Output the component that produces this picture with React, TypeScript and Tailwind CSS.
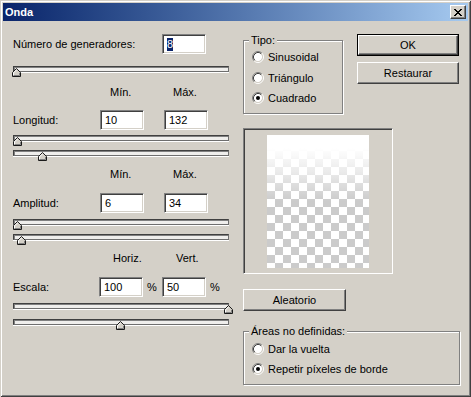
import React from 'react';

const sunken =
  'border border-t-[#808080] border-l-[#808080] border-b-white border-r-white shadow-[inset_1px_1px_0_#404040,inset_-1px_-1px_0_#d4d0c8]';
const raised =
  'border border-t-white border-l-white border-b-[#404040] border-r-[#404040] shadow-[inset_-1px_-1px_0_#808080]';
const etched = 'border border-[#808080] shadow-[inset_1px_1px_0_#ffffff,1px_1px_0_#ffffff]';

const CloseBtn: React.FC = () => (
  <div className={`w-[16px] h-[14px] bg-[#d4d0c8] flex items-center justify-center ${raised}`}>
    <svg width="8" height="7" viewBox="0 0 8 7" shapeRendering="crispEdges">
      <path
        fill="#000"
        d="M0 0h2v1H0zM6 0h2v1H6zM1 1h2v1H1zM5 1h2v1H5zM2 2h4v1H2zM3 3h2v1H3zM2 4h4v1H2zM1 5h2v1H1zM5 5h2v1H5zM0 6h2v1H0zM6 6h2v1H6z"
      />
    </svg>
  </div>
);

const Thumb: React.FC<{ left: number }> = ({ left }) => (
  <svg
    width="9"
    height="9"
    viewBox="0 0 9 9"
    className="absolute top-[1px]"
    style={{ left }}
  >
    <polygon points="0.5,8.5 0.5,4.5 4.5,0.5 8.5,4.5 8.5,8.5" fill="#d4d0c8" stroke="#1a1a1a" />
    <polyline points="1.5,7.5 1.5,4.9 4.5,1.9" fill="none" stroke="#ffffff" />
    <polyline points="7.5,4.9 7.5,7.5 1.5,7.5" fill="none" stroke="#808080" />
  </svg>
);

// thumb offset measured from the track's left edge
const Slider: React.FC<{ pos: number; className?: string }> = ({ pos, className = '' }) => (
  <div
    className={`relative w-[216px] h-[6px] bg-[#efeeec] border border-t-[#404040] border-l-[#404040] border-b-[#6e6e6e] border-r-[#6e6e6e] shadow-[inset_1px_1px_0_#808080,0_1px_0_#ffffff] ${className}`}
  >
    <Thumb left={pos - 1} />
  </div>
);

const Field: React.FC<{ value: string; selected?: boolean }> = ({ value, selected }) => (
  <div className={`w-[44px] h-[20px] bg-white pl-[4px] flex items-center ${sunken}`}>
    {selected ? <span className="bg-[#0a246a] text-white">{value}</span> : value}
  </div>
);

const Radio: React.FC<{ checked?: boolean }> = ({ checked }) => (
  <svg width="12" height="12" viewBox="0 0 12 12" className="shrink-0">
    <circle cx="6" cy="6" r="4.2" fill="#ffffff" />
    <path d="M2.11 9.89 A5.5 5.5 0 0 1 9.89 2.11" fill="none" stroke="#808080" />
    <path d="M9.89 2.11 A5.5 5.5 0 0 1 2.11 9.89" fill="none" stroke="#ffffff" />
    <path d="M2.82 9.18 A4.5 4.5 0 0 1 9.18 2.82" fill="none" stroke="#404040" />
    <path d="M9.18 2.82 A4.5 4.5 0 0 1 2.82 9.18" fill="none" stroke="#d4d0c8" />
    {checked && <circle cx="6" cy="6" r="2" fill="#000000" />}
  </svg>
);

const RadioRow: React.FC<{ label: string; checked?: boolean; className?: string }> = ({
  label,
  checked,
  className = '',
}) => (
  <div className={`h-[12px] flex items-center gap-[4px] ${className}`}>
    <Radio checked={checked} />
    <span className="whitespace-nowrap">{label}</span>
  </div>
);

const Legend: React.FC<{ text: string }> = ({ text }) => (
  <span className="absolute left-[5px] top-[-7px] px-[2px] bg-[#d4d0c8]">{text}</span>
);

export default function App() {
  return (
    <div className="w-[471px] h-[397px] bg-[#d4d0c8] p-[3px] flex flex-col font-['Liberation_Sans',Arial,sans-serif] text-[11px] leading-[13px] text-black shadow-[inset_1px_1px_0_#d4d0c8,inset_-1px_-1px_0_#404040,inset_2px_2px_0_#ffffff,inset_-2px_-2px_0_#808080]">
      {/* title bar */}
      <div className="h-[18px] shrink-0 flex items-center justify-between px-[2px] bg-linear-to-r from-[#0a246a] to-[#a6caf0]">
        <span className="font-bold text-white">Onda</span>
        <CloseBtn />
      </div>

      <div className="flex">
        {/* left column */}
        <div className="ml-[10px] w-[217px] flex flex-col">
          <div className="mt-[13px] h-[20px] flex items-center">
            <span className="w-[149px]">Número de generadores:</span>
            <Field value="8" selected />
          </div>
          <Slider pos={-1} className="mt-[12px]" />

          <div className="mt-[14px] h-[13px] flex pl-[97px]">
            <span className="w-[63px]">Mín.</span>
            <span>Máx.</span>
          </div>
          <div className="mt-[11px] h-[20px] flex items-center">
            <span className="w-[87px]">Longitud:</span>
            <Field value="10" />
            <div className="w-[20px]" />
            <Field value="132" />
          </div>
          <Slider pos={0} className="mt-[5px]" />
          <Slider pos={25} className="mt-[9px]" />

          <div className="mt-[12px] h-[13px] flex pl-[97px]">
            <span className="w-[63px]">Mín.</span>
            <span>Máx.</span>
          </div>
          <div className="mt-[12px] h-[20px] flex items-center">
            <span className="w-[87px]">Amplitud:</span>
            <Field value="6" />
            <div className="w-[20px]" />
            <Field value="34" />
          </div>
          <Slider pos={0} className="mt-[6px]" />
          <Slider pos={4} className="mt-[9px]" />

          <div className="mt-[12px] h-[13px] flex pl-[100px]">
            <span className="w-[63px]">Horiz.</span>
            <span>Vert.</span>
          </div>
          <div className="mt-[12px] h-[20px] flex items-center">
            <span className="w-[86px]">Escala:</span>
            <Field value="100" />
            <span className="w-[19px] pl-[4px]">%</span>
            <Field value="50" />
            <span className="pl-[4px]">%</span>
          </div>
          <Slider pos={211} className="mt-[6px]" />
          <Slider pos={103} className="mt-[10px]" />
        </div>

        {/* right column */}
        <div className="ml-[13px] flex flex-col">
          <div className="flex items-start">
            <div className={`relative mt-[19px] w-[100px] h-[74px] pt-[10px] pl-[8px] flex flex-col ${etched}`}>
              <Legend text="Tipo:" />
              <RadioRow label="Sinusoidal" />
              <RadioRow label="Triángulo" className="mt-[9px]" />
              <RadioRow label="Cuadrado" checked className="mt-[8px]" />
            </div>
            <div className="ml-[14px] mt-[13px] w-[102px] flex flex-col">
              <div className="h-[22px] border border-black">
                <div className={`h-full flex items-center justify-center ${raised}`}>OK</div>
              </div>
              <div className={`mt-[6px] h-[22px] flex items-center justify-center ${raised}`}>Restaurar</div>
            </div>
          </div>

          <div className={`mt-[14px] w-[150px] h-[146px] flex items-center justify-center ${sunken} shadow-[inset_1px_1px_0_#404040]`}>
            <div className="relative w-[102px] h-[133px] bg-[conic-gradient(#cbcbcb_25%,#ffffff_0_50%,#cbcbcb_0_75%,#ffffff_0)] bg-[length:16px_16px]">
              <div className="absolute inset-0 bg-linear-to-b from-white from-[10%] via-white/60 via-[28%] to-transparent to-[50%]" />
            </div>
          </div>

          <div className={`mt-[15px] w-[103px] h-[22px] flex items-center justify-center ${raised}`}>Aleatorio</div>

          <div className={`relative mt-[20px] w-[217px] h-[54px] pt-[11px] pl-[8px] flex flex-col ${etched}`}>
            <Legend text="Áreas no definidas:" />
            <RadioRow label="Dar la vuelta" />
            <RadioRow label="Repetir píxeles de borde" checked className="mt-[8px]" />
          </div>
        </div>
      </div>
    </div>
  );
}
